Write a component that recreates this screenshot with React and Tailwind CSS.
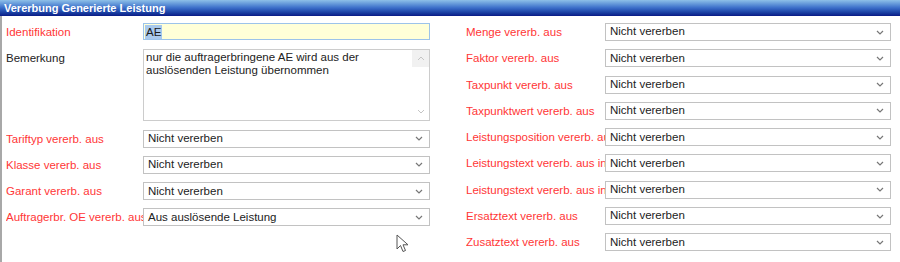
import React from "react";

const leftSelects = [
  { label: "Tariftyp vererb. aus", value: "Nicht vererben" },
  { label: "Klasse vererb. aus", value: "Nicht vererben" },
  { label: "Garant vererb. aus", value: "Nicht vererben" },
  { label: "Auftragerbr. OE vererb. aus", value: "Aus auslösende Leistung" },
];

const rightSelects = [
  "Menge vererb. aus",
  "Faktor vererb. aus",
  "Taxpunkt vererb. aus",
  "Taxpunktwert vererb. aus",
  "Leistungsposition vererb. aus",
  "Leistungstext vererb. aus ins Ergebnis",
  "Leistungstext vererb. aus ins Ergebnis",
  "Ersatztext vererb. aus",
  "Zusatztext vererb. aus",
];

const Chevron = () => (
  <svg width="8" height="5" viewBox="0 0 8 5" className="shrink-0">
    <path d="M1 1 L4 4 L7 1" fill="none" stroke="#777" strokeWidth="1.2" />
  </svg>
);

const Select = ({ value, width }) => (
  <div className={`${width} h-[18px] shrink-0 border border-[#c2c2c2] bg-white flex items-center justify-between pl-[4px] pr-[6px]`}>
    <span className="text-[#222] whitespace-nowrap">{value}</span>
    <Chevron />
  </div>
);

const Label = ({ children, width, black }) => (
  <div className={`${width} shrink-0 overflow-hidden whitespace-nowrap leading-[18px] ${black ? "text-[#222]" : "text-[#ff3636]"}`}>
    {children}
  </div>
);

const Row = ({ children }) => <div className="flex items-start h-[18px]">{children}</div>;

export default function App() {
  return (
    <div className="w-[900px] h-[262px] overflow-hidden bg-white relative text-[11.5px]" style={{ fontFamily: '"Liberation Sans", Arial, sans-serif' }}>
      <div className="h-[16px] bg-gradient-to-b from-[#8ec0e8] via-[#3a6cc8] to-[#0b1a86] text-white font-bold text-[11px] leading-[16px] pl-[4px]">
        Vererbung Generierte Leistung
      </div>
      <div className="h-[246px] border-l-2 border-[#a8a8a8] flex pl-[4px] pt-[7px] gap-[36px]">
        <div className="w-[424px] flex flex-col gap-y-[8.3px]">
          <Row>
            <Label width="w-[137px]">Identifikation</Label>
            <div className="w-[287px] h-[17px] border border-[#9cc3ea] bg-[#ffffd8] flex items-center pl-[1px]">
              <span className="bg-[#a9c9ec] text-[#1a1a1a] px-[1px] leading-[14px]">AE</span>
            </div>
          </Row>
          <div className="flex items-start h-[72px]">
            <Label width="w-[137px]" black>Bemerkung</Label>
            <div className="w-[287px] h-[72px] border border-[#cccccc] bg-white flex">
              <div className="flex-1 pl-[2px] pt-[1px] leading-[13px] text-[#222]">
                nur die auftragerbringene AE wird aus der
                <br />
                auslösenden Leistung übernommen
              </div>
              <div className="w-[17px] flex flex-col justify-between items-center">
                <div className="w-[17px] h-[17px] bg-[#f1f1f1] flex items-center justify-center">
                  <svg width="8" height="5" viewBox="0 0 8 5">
                    <path d="M1 4 L4 1 L7 4" fill="none" stroke="#c4c4c4" strokeWidth="1" />
                  </svg>
                </div>
                <div className="w-[17px] h-[17px] flex items-center justify-center">
                  <svg width="8" height="5" viewBox="0 0 8 5">
                    <path d="M1 1 L4 4 L7 1" fill="none" stroke="#c4c4c4" strokeWidth="1" />
                  </svg>
                </div>
              </div>
            </div>
          </div>
          {leftSelects.map((s, i) => (
            <Row key={i}>
              <Label width="w-[137px]">{s.label}</Label>
              <Select value={s.value} width="w-[287px]" />
            </Row>
          ))}
        </div>
        <div className="w-[425px] flex flex-col gap-y-[8.3px]">
          {rightSelects.map((l, i) => (
            <Row key={i}>
              <Label width="w-[139px]">{l}</Label>
              <Select value="Nicht vererben" width="w-[286px]" />
            </Row>
          ))}
        </div>
      </div>
      <svg className="absolute left-[396px] top-[234px]" width="14" height="20" viewBox="0 0 14 20">
        <path d="M1 1 L1 15 L4.5 11.5 L7 17.5 L9.5 16.5 L7 10.8 L12 10.8 Z" fill="#fff" stroke="#555" strokeWidth="1" strokeLinejoin="round" />
      </svg>
    </div>
  );
}
